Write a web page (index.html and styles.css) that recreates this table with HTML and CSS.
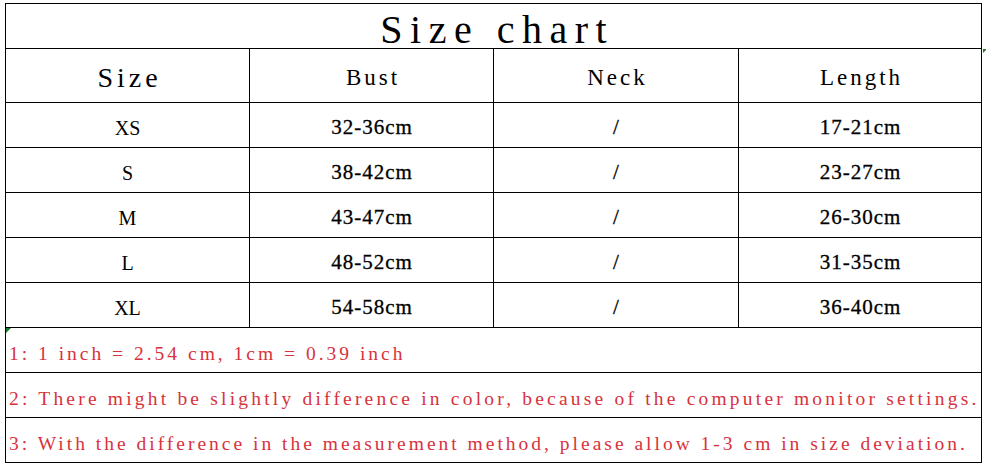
FILE: index.html
```html
<!DOCTYPE html>
<html lang="en">
<head>
<meta charset="utf-8">
<title>Size chart</title>
<link rel="stylesheet" href="styles.css">
</head>
<body>
<div class="chart">
  <div class="cell title"><span class="txt">Size chart</span></div>

  <div class="cell head head-size"><span class="txt">Size</span></div>
  <div class="cell head"><span class="txt">Bust</span></div>
  <div class="cell head"><span class="txt">Neck</span></div>
  <div class="cell head head-last"><span class="txt">Length</span></div>

  <div class="cell sz">XS</div>
  <div class="cell val"><span class="txt">32-36cm</span></div>
  <div class="cell val"><span class="txt">/</span></div>
  <div class="cell val"><span class="txt">17-21cm</span></div>

  <div class="cell sz">S</div>
  <div class="cell val"><span class="txt">38-42cm</span></div>
  <div class="cell val"><span class="txt">/</span></div>
  <div class="cell val"><span class="txt">23-27cm</span></div>

  <div class="cell sz">M</div>
  <div class="cell val"><span class="txt">43-47cm</span></div>
  <div class="cell val"><span class="txt">/</span></div>
  <div class="cell val"><span class="txt">26-30cm</span></div>

  <div class="cell sz">L</div>
  <div class="cell val"><span class="txt">48-52cm</span></div>
  <div class="cell val"><span class="txt">/</span></div>
  <div class="cell val"><span class="txt">31-35cm</span></div>

  <div class="cell sz">XL</div>
  <div class="cell val"><span class="txt">54-58cm</span></div>
  <div class="cell val"><span class="txt">/</span></div>
  <div class="cell val"><span class="txt">36-40cm</span></div>

  <div class="cell note note-first">1: 1 inch = 2.54 cm, 1cm = 0.39 inch</div>
  <div class="cell note note-wide">2: There might be slightly difference in color, because of the computer monitor settings.</div>
  <div class="cell note">3: With the difference in the measurement method, please allow 1-3 cm in size deviation.</div>
</div>
</body>
</html>
```
FILE: styles.css
```css
html, body {
  margin: 0;
  padding: 0;
  background: #ffffff;
}

.chart {
  display: grid;
  grid-template-columns: 243px 243px 244px 242px;
  grid-template-rows: 44px 53px repeat(8, 44px);
  gap: 1px;
  padding: 1px;
  background: #000000;
  width: max-content;
  margin: 3px 0 0 5px;
  font-family: "Liberation Serif", "Times New Roman", serif;
  color: #000000;
}

.cell {
  background: #ffffff;
  display: flex;
  justify-content: center;
  align-items: flex-end;
  white-space: nowrap;
  position: relative;
}

/* letter-spaced text: offset the trailing spacing so it stays centred */
.txt {
  display: inline-block;
  margin-right: calc(-1 * var(--ls, 0px));
  letter-spacing: var(--ls, 0px);
}

.title {
  grid-column: 1 / -1;
  font-size: 40px;
  line-height: 37px;
  --ls: 7.5px;
}

.head {
  font-size: 23px;
  line-height: 23px;
  padding-bottom: 13px;
  --ls: 3px;
}

.head-size {
  font-size: 28px;
  --ls: 4px;
}

.head-last::after {
  content: "";
  position: absolute;
  top: 0;
  left: calc(100% + 2px);
  border-top: 4px solid #1f7a2e;
  border-right: 4px solid transparent;
}

.sz {
  font-size: 20px;
  line-height: 20px;
  padding-bottom: 9px;
}

.val {
  font-size: 21px;
  line-height: 21px;
  padding-bottom: 9px;
  -webkit-text-stroke: 0.3px #000000;
  --ls: 1px;
}

.note {
  grid-column: 1 / -1;
  justify-content: flex-start;
  color: #d8323c;
  font-size: 19.5px;
  line-height: 19.5px;
  letter-spacing: 3px;
  padding: 0 0 9px 3px;
}

.note-wide {
  letter-spacing: 3.2px;
}

.note-first::before {
  content: "";
  position: absolute;
  top: 0;
  left: 0;
  border-top: 5px solid #1f7a2e;
  border-right: 5px solid transparent;
}
```
